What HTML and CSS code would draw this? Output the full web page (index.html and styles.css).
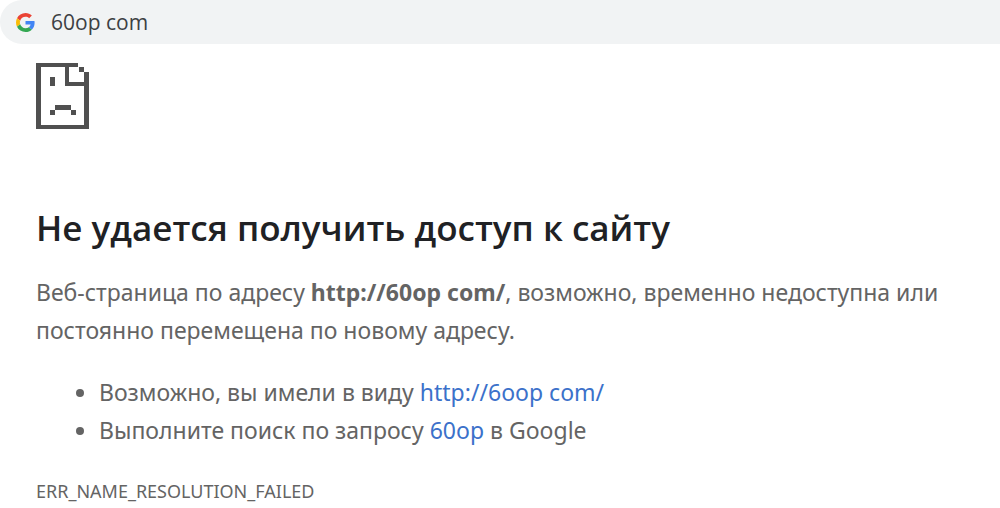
FILE: index.html
```
<!DOCTYPE html>
<html lang="ru">
<head>
    <meta charset="UTF-8">
    <meta name="viewport" content="width=device-width, initial-scale=1.0">
    <title>60op com</title>
    <link rel="stylesheet" href="styles.css">
</head>
<body>

    <header class="address-bar">
        <svg class="google-icon" viewBox="0 0 48 48" aria-hidden="true">
            <path fill="#ea4335" d="M24 9.5c3.54 0 6.71 1.22 9.21 3.6l6.85-6.85C35.9 2.38 30.47 0 24 0 14.62 0 6.51 5.38 2.56 13.22l7.98 6.19C12.43 13.72 17.74 9.5 24 9.5z"/>
            <path fill="#4285f4" d="M46.98 24.55c0-1.57-.15-3.09-.38-4.55H24v9.02h12.94c-.58 2.96-2.26 5.48-4.78 7.18l7.73 6c4.51-4.18 7.09-10.36 7.09-17.65z"/>
            <path fill="#fbbc05" d="M10.53 28.59c-.48-1.45-.76-2.99-.76-4.59s.27-3.14.76-4.59l-7.98-6.19C.92 16.46 0 20.12 0 24s.92 7.54 2.56 10.78l7.97-6.19z"/>
            <path fill="#34a853" d="M24 48c6.48 0 11.93-2.13 15.89-5.81l-7.73-6c-2.15 1.45-4.92 2.3-8.16 2.3-6.26 0-11.57-4.22-13.47-9.91l-7.98 6.19C6.51 42.62 14.62 48 24 48z"/>
        </svg>
        <input class="address" type="text" value="60op com" aria-label="Адресная строка">
    </header>

    <main class="error-page">
        <!-- Sad page icon -->
        <svg class="sad-page" viewBox="0 0 53 66" aria-hidden="true">
            <path d="M0 0h42v4H5v58h43V23H29V4h4v15h15V9h5v57H0z"/>
            <path d="M43 4h5v5h-5zM14 14h5v9h-5zM19 42h16v5H19zM14 47h5v5h-5zM35 47h5v5h-5z"/>
        </svg>

        <h1>Не удается получить доступ к сайту</h1>

        <p>Веб-страница по адресу <strong>http://60op com/</strong>, возможно, временно недоступна или постоянно перемещена по новому адресу.</p>

        <ul>
            <li>Возможно, вы имели в виду <a href="#">http://6oop com/</a></li>
            <li>Выполните поиск по запросу <a href="#">60op</a> в Google</li>
        </ul>

        <div class="error-code">ERR_NAME_RESOLUTION_FAILED</div>
    </main>

</body>
</html>
```
FILE: styles.css
```
body {
    margin: 0;
    font-family: "Segoe UI", "Noto Sans", "Open Sans", sans-serif;
    background-color: #fff;
    color: #646464;
}

.address-bar {
    display: flex;
    align-items: center;
    gap: 16px;
    height: 44px;
    padding-left: 16px;
    background-color: #f1f3f4;
    border-radius: 22px 0 0 22px;
}

.google-icon {
    width: 19px;
    height: 19px;
}

.address {
    flex: 1;
    padding: 0;
    border: 0;
    outline: none;
    background: none;
    font-family: "Segoe UI", "Open Sans", sans-serif;
    font-size: 21px;
    color: #3c4043;
}

.error-page {
    padding: 19px 36px 0;
}

.sad-page {
    display: block;
    width: 53px;
    height: 66px;
    fill: #505050;
}

h1 {
    margin: 75px 0 21px;
    font-family: "Segoe UI", "Open Sans", sans-serif;
    font-size: 35px;
    font-weight: 600;
    line-height: 48px;
    color: #202124;
}

p {
    margin: 0;
    font-size: 23px;
    line-height: 38px;
}

ul {
    margin: 24px 0;
    padding-left: 63px;
    font-size: 23px;
    line-height: 38px;
}

a {
    color: #3b71ca;
    text-decoration: none;
}

.error-code {
    padding-top: 6px;
    font-size: 18px;
    line-height: 24px;
}
```
